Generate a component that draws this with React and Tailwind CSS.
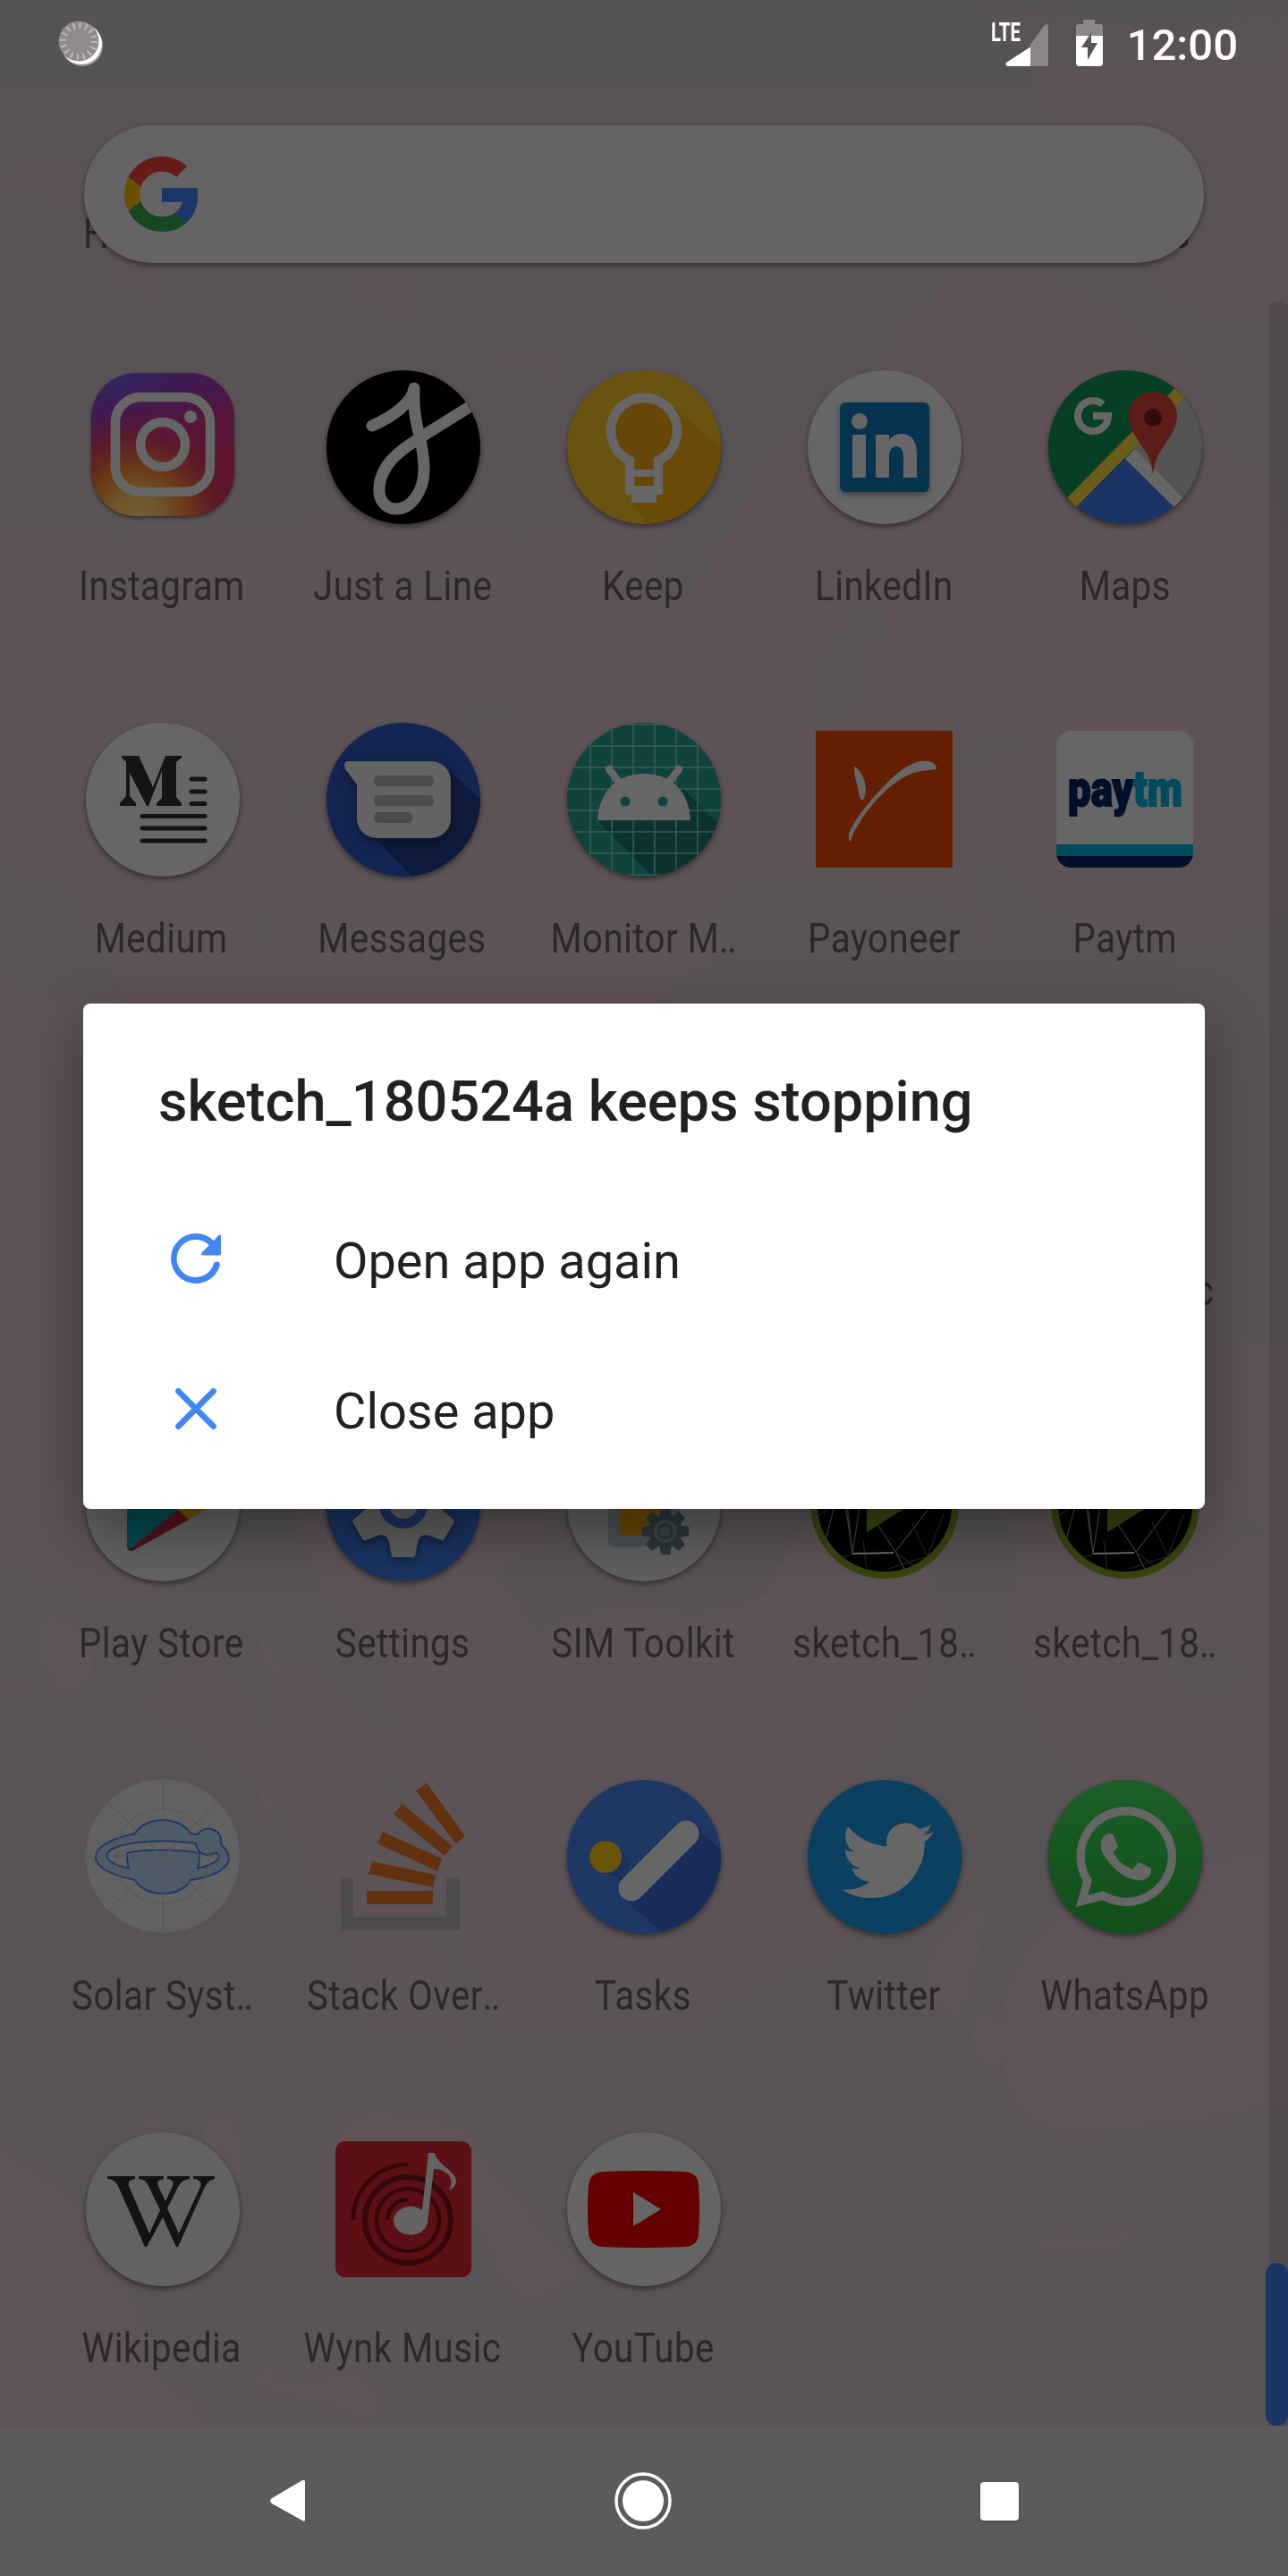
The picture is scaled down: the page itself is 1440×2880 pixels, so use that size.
import React from "react";
import { FaWhatsapp } from "react-icons/fa";

const CHALK = "#666666";

function Disc({ fill = CHALK, children, id }) {
  return (
    <g>
      <clipPath id={"clip-" + id}>
        <circle r="86" />
      </clipPath>
      <circle r="86" fill={fill} className="drop-shadow-[0_3px_3px_rgba(0,0,0,0.45)]" />
      <g clipPath={"url(#clip-" + id + ")"}>{children}</g>
    </g>
  );
}

function Instagram() {
  return (
    <g>
      <defs>
        <linearGradient id="igBase" x1="0" y1="0" x2="0.35" y2="1">
          <stop offset="0" stopColor="#2a2d63" />
          <stop offset="0.25" stopColor="#3f1a52" />
          <stop offset="0.6" stopColor="#591639" />
          <stop offset="1" stopColor="#5d1527" />
        </linearGradient>
        <radialGradient id="igGlow" cx="0.32" cy="1" r="0.75">
          <stop offset="0" stopColor="#73602f" />
          <stop offset="0.22" stopColor="#6e5629" />
          <stop offset="0.45" stopColor="#6b3a15" />
          <stop offset="0.75" stopColor="#5c1a27" stopOpacity="0.8" />
          <stop offset="1" stopColor="#591639" stopOpacity="0" />
        </radialGradient>
      </defs>
      <rect x="-80" y="-83" width="160" height="160" rx="50" fill="url(#igBase)" className="drop-shadow-[0_2px_2px_rgba(0,0,0,0.45)]" />
      <rect x="-80" y="-83" width="160" height="160" rx="50" fill="url(#igGlow)" />
      <g fill="none" stroke={CHALK} strokeWidth="10.5">
        <rect x="-53" y="-56" width="106" height="106" rx="28" />
        <circle cy="-3" r="25" />
      </g>
      <circle cx="31" cy="-34" r="7" fill={CHALK} />
    </g>
  );
}

function JustALine() {
  return (
    <Disc id="jal" fill="#000">
      <path d="M-35 -24C-12 -34 10 -50 12 -66C10 -22 23 -12 23 25C23 50 8 69 -8 69C-21 69 -28 58 -27 45C-25 14 6 -2 24 -14L80 -49" fill="none" stroke={CHALK} strokeWidth="13" strokeLinecap="round" strokeLinejoin="round" />
    </Disc>
  );
}

function Keep() {
  return (
    <Disc id="keep" fill="#6a520f">
      <path d="M34 -44L130 40V110H20L-14 60Z" fill="#684b06" />
      <path d="M-16 53V16A37 37 0 1 1 16 16V53Z" fill="#67460a" />
      <path d="M-16 48V15A37 37 0 1 1 16 15V48" fill="none" stroke={CHALK} strokeWidth="10.5" />
      <path d="M-21 25H21V33H-21ZM-21 43H21V53H14V62H-14V53H-21Z" fill={CHALK} />
    </Disc>
  );
}

function LinkedIn() {
  return (
    <Disc id="li">
      <rect x="-50" y="-50" width="100" height="100" rx="6" fill="#063450" className="drop-shadow-[0_3px_3px_rgba(0,0,0,0.35)]" />
      <g fill={CHALK}>
        <circle cx="-28" cy="-29" r="9" />
        <rect x="-36" y="-14" width="15" height="48" />
        <path d="M-10 -14H5V-8C11 -18 36 -21 36 7V34H21V10C21 -5 5 -4 5 10V34H-10Z" />
      </g>
    </Disc>
  );
}

function Maps() {
  return (
    <Disc id="maps" fill="#073f24">
      <path d="M90 -90L0 13L90 110Z" fill="#535353" />
      <path d="M11 2L90 83L66 100L0 13Z" fill="#666" />
      <path d="M-90 102L0 13L90 102Z" fill="#1b3564" />
      <path d="M-85 77L76 -87L88 -77L-70 82Z" fill="#6b5c1a" />
      <path d="M31 31C29 8 20 3 9 -17C-4 -40 10 -62 31 -62S66 -40 53 -17C42 3 33 8 31 31Z" fill="#5c1c18" />
      <circle cx="31" cy="-33" r="10" fill="#340d0b" />
      <path d="M-25 -48A17 17 0 1 0 -19 -35H-36" fill="none" stroke={CHALK} strokeWidth="8" />
    </Disc>
  );
}

function Medium() {
  return (
    <Disc id="med">
      <path d="M-46 -49H-27L-11 -14L3 -49H21V-47L15 -42V-3L21 4V7H-7V4L-1 -2V-32L-16 7H-18L-37 -30V-4L-30 4V7H-48V4L-41 -4V-42L-46 -47Z" fill="#141414" />
      <path d="M32 -23H47M32 -9H47M32 4.500H47M-23 18.500H47M-23 32H47M-23 46H47" stroke="#141414" strokeWidth="5" strokeLinecap="round" />
    </Disc>
  );
}

function Messages() {
  return (
    <Disc id="msg" fill="#142552">
      <path d="M49 -34L130 40V120H44L-38 38Z" fill="#0f1b3c" />
      <path d="M-61 -43H31A22 22 0 0 1 53 -21V21A22 22 0 0 1 31 43H-30A22 22 0 0 1 -52 21V-17L-65 -34Q-68 -43 -61 -43Z" fill="#636363" className="drop-shadow-[0_4px_6px_rgba(0,0,0,0.4)]" />
      <g fill="#4b4b4b">
        <rect x="-33" y="-27" width="67" height="12" rx="5" />
        <rect x="-33" y="-5" width="67" height="12" rx="5" />
        <rect x="-33" y="14" width="43" height="12" rx="5" />
      </g>
    </Disc>
  );
}

function MonitorM() {
  return (
    <Disc id="mon" fill="#11433e">
      <path d="M44 -12L130 74V140H62L-52 23Z" fill="#0d332e" />
      <path d="M-60 -90V90M-36 -90V90M-12 -90V90M12 -90V90M36 -90V90M60 -90V90M-90 -84H90M-90 -60H90M-90 -36H90M-90 -12H90M-90 12H90M-90 36H90M-90 60H90M-90 84H90" stroke="#345f58" strokeWidth="1.500" />
      <path d="M-52 23C-50 -12 -28 -29 0 -29S50 -12 52 23Z" fill={CHALK} />
      <path d="M-39 -34L-26 -17M39 -34L26 -17" stroke={CHALK} strokeWidth="8.500" strokeLinecap="round" />
      <circle cx="-21" cy="2" r="5.500" fill="#11433e" />
      <circle cx="21" cy="2" r="5.500" fill="#11433e" />
    </Disc>
  );
}

function Payoneer() {
  return (
    <g>
      <rect x="-77" y="-77" width="153" height="153" fill="#641f00" />
      <path d="M-38 47C-34 30 -8 -8 20 -24C34 -33 47 -32 57 -34Q60 -36 54 -41C42 -47 25 -40 8 -24C-12 -5 -34 22 -40 38Q-41 45 -38 47ZM-33 -37Q-22 -28 -21 -12Q-22 -1 -25 1Q-28 1 -30 -14Q-35 -30 -34 -37Z" fill="#666" />
    </g>
  );
}

function Paytm() {
  return (
    <g>
      <clipPath id="clip-paytm">
        <rect x="-77" y="-77" width="153" height="153" rx="16" />
      </clipPath>
      <g clipPath="url(#clip-paytm)">
        <rect x="-77" y="-77" width="153" height="128" fill="#666" />
        <rect x="-77" y="50" width="153" height="13" fill="#004a60" />
        <rect x="-77" y="63" width="153" height="14" fill="#00102b" />
      </g>
      <text x="-64" y="7" textLength="128" lengthAdjust="spacingAndGlyphs" fontSize="56" fill="#00102b" strokeWidth="2" className="font-['Roboto'] font-black">
        <tspan stroke="#00102b">pay</tspan>
        <tspan fill="#004a60" stroke="#004a60">tm</tspan>
      </text>
    </g>
  );
}

function PlayStore() {
  return (
    <Disc id="play" fill="#626262">
      <path d="M-40 -50V48Q-39 54 -34 51L17 6L-12 -26Z" fill="#00494f" />
      <path d="M-38 51Q-36 53 -32 51L29 17L17 6Z" fill="#54121d" />
      <path d="M17 6L29 17L54 2Q56 -1 52 -4L30 -14Z" fill="#635200" />
    </Disc>
  );
}

const SIX = [0, 60, 120, 180, 240, 300];
const EIGHT = [0, 45, 90, 135, 180, 225, 270, 315];

function Settings() {
  return (
    <Disc id="set" fill="#1a3361">
      <g fill="#5e5e5e" className="drop-shadow-[0_3px_4px_rgba(0,0,0,0.4)]">
        <circle r="41" />
        {SIX.map((a) => (
          <path key={a} transform={"rotate(" + a + ")"} d="M-24 32Q-17 36 -15.500 44L-13.500 56Q-13 59 -10 59H10Q13 59 13.500 56L15.500 44Q17 36 24 32Z" />
        ))}
      </g>
      <circle r="27" fill="#1a3361" />
      <circle r="16" fill="#5e5e5e" />
    </Disc>
  );
}

function SimToolkit() {
  return (
    <Disc id="sim" fill="#606060">
      <rect x="-40" y="-50" width="80" height="97" rx="6" fill="#4a5052" />
      <rect x="-28" y="-20" width="46" height="55" rx="5" fill="#664803" />
      <g transform="translate(24 30)" fill="#2c363a">
        <circle r="18" />
        {EIGHT.map((a) => (
          <path key={a} transform={"rotate(" + a + ")"} d="M-7 14L-5 26H5L7 14Z" />
        ))}
        <circle r="11" fill="none" stroke="#3b464b" strokeWidth="4" />
        <circle r="6" fill="#3b464b" />
      </g>
    </Disc>
  );
}

function Sketch() {
  return (
    <g>
      <circle r="79" fill="#020202" stroke="#384511" strokeWidth="8" />
      <g fill="none" stroke="#444" strokeWidth="1.200">
        <path d="M-66 40L-48 -30L-36 55L-26 -10M-36 55L-44 -20M12 53L56 -4M12 53L-12 16M12 53L22 72" />
        <path d="M-48 60L-36 55M12 53L32 68M30 20L48 58L66 10M-24 40L-20 74M48 58L4 72M-74 12L-54 0" stroke="#262626" />
        <path d="M-36 55L10 54" stroke="#6b6b6b" strokeWidth="2" />
      </g>
      <path d="M-20 -52V31L47 -11Z" fill="#384511" />
    </g>
  );
}

function SolarSystem() {
  return (
    <g>
      <circle cy="-1" r="86" fill="#616161" />
      <path d="M-31 -26C-20 -46 20 -46 31 -26L39 -25C46 -37 68 -32 65 -14C86 5 68 20 31 26C20 46 -20 46 -31 26C-90 14 -90 -14 -31 -26ZM-63 -1C-60 7 -50 10 -38 13C-40 6 -40 2 -40 -4C-25 -9 20 -9 41 -4C41 2 41 6 39 13C55 9 70 2 59 -5C50 2 38 -4 37 -15C0 -21 -62 -17 -63 -1Z" fill="#4f5a67" fillRule="evenodd" stroke="#1d3868" strokeWidth="2" strokeLinejoin="round" />
      <g fill="none" stroke="#555" strokeOpacity="0.7" strokeWidth="1.500">
        <path d="M-86 -1H86M0 -86V85M-61 -61L61 60M61 -61L-61 60" />
        <circle r="53" cy="-1" />
      </g>
    </g>
  );
}

function StackOverflow() {
  return (
    <g>
      <path d="M-70 23H-56V67H48V23H63V82H-70Z" fill="#4b4b4b" />
      <path d="M-41 38H33V53H-41ZM-35 5L36 20L33 34L-39 19ZM-23 -28L43 2L38 16L-29 -15ZM-1 -59L55 -12L46 -1L-11 -48ZM26 -83L69 -23L58 -15L14 -74Z" fill="#62310f" />
    </g>
  );
}

function Tasks() {
  return (
    <Disc id="tasks" fill="#1e3865">
      <path d="M57 -36L110 17V140H80L-23 46Z" fill="#192c59" />
      <path d="M-31 -13L-14 4L-24 26L-56 13Z" fill="#1b325f" />
      <circle cx="-43" r="18" fill="#6a5408" />
      <path d="M-14 35L47 -26" stroke={CHALK} strokeWidth="29" strokeLinecap="round" />
    </Disc>
  );
}

function Twitter() {
  return (
    <Disc id="tw" fill="#0c4060">
      <path transform="translate(-48 -47.500) scale(4.300)" fill={CHALK} d="M23.953 4.570a10 10 0 01-2.825.775 4.958 4.958 0 002.163-2.723c-.951.555-2.005.959-3.127 1.184a4.920 4.920 0 00-8.384 4.482C7.690 8.095 4.067 6.130 1.640 3.162a4.822 4.822 0 00-.666 2.475c0 1.710.870 3.213 2.188 4.096a4.904 4.904 0 01-2.228-.616v.060a4.923 4.923 0 003.946 4.827 4.996 4.996 0 01-2.212.085 4.936 4.936 0 004.604 3.417 9.867 9.867 0 01-6.102 2.105c-.390 0-.779-.023-1.170-.067a13.995 13.995 0 007.557 2.209c9.053 0 13.998-7.496 13.998-13.985 0-.210 0-.420-.015-.630A9.935 9.935 0 0024 4.590z" />
    </Disc>
  );
}

function WhatsApp() {
  return (
    <g>
      <linearGradient id="waFill" x1="0" y1="0" x2="0" y2="1">
        <stop offset="0.1" stopColor="#1b5d26" />
        <stop offset="0.9" stopColor="#12501b" />
      </linearGradient>
      <Disc id="wa" fill="url(#waFill)">
        <FaWhatsapp x="-63" y="-64" size={128} color={CHALK} />
      </Disc>
    </g>
  );
}

function Wikipedia() {
  return (
    <Disc id="wiki" fill="#626262">
      <path fill="#131313" d="M-62 -37H-31V-34Q-40 -33 -38 -26L-15 27L-3 1L-17 -28Q-20 -34 -27 -34V-37H1V-34Q-8 -33 -5 -26L3 -9L11 -26Q14 -33 5 -34V-37H30V-34Q21 -33 17 -25L5 -1L18 27L42 -25Q45 -33 34 -34V-37H58V-34Q51 -33 47 -25L17 42H15L0 9L-18 42H-20L-50 -26Q-54 -34 -62 -34Z" />
    </Disc>
  );
}

function WynkMusic() {
  return (
    <g>
      <rect x="-76" y="-76" width="152" height="152" rx="11" fill="#5c1013" />
      <g fill="none" stroke="#33070a">
        <path d="M5 -50A61 61 0 0 0 -56 12" strokeWidth="4.500" />
        <circle cx="5" cy="12" r="48" strokeWidth="6" />
        <circle cx="5" cy="12" r="35" strokeWidth="4.500" />
        <path d="M5 -11A23 23 0 0 0 -18 12" strokeWidth="4.500" />
      </g>
      <path d="M28 -63H35C37 -50 58 -44 59 -32Q59 -25 51 -21C58 -34 50 -45 34 -45L27 14A19 16 0 1 1 21 1Z" fill="#636363" />
    </g>
  );
}

function YouTube() {
  return (
    <Disc id="yt" fill="#646464">
      <path d="M-46 -42Q0 -44 46 -42Q61 -41 61 -26Q63 0 61 26Q61 41 46 42Q0 44 -46 42Q-61 41 -62 26Q-64 0 -62 -26Q-61 -41 -46 -42Z" fill="#650000" />
      <path d="M-12 -19L19 0L-12 19Z" fill="#666" />
    </Disc>
  );
}

const rows = [
  [
    { label: "Instagram", Icon: Instagram },
    { label: "Just a Line", Icon: JustALine },
    { label: "Keep", Icon: Keep },
    { label: "LinkedIn", Icon: LinkedIn },
    { label: "Maps", Icon: Maps },
  ],
  [
    { label: "Medium", Icon: Medium },
    { label: "Messages", Icon: Messages },
    { label: "Monitor M‥", Icon: MonitorM },
    { label: "Payoneer", Icon: Payoneer },
    { label: "Paytm", Icon: Paytm },
  ],
  [{}, {}, {}, {}, { label: "Play Music" }],
  [
    { label: "Play Store", Icon: PlayStore },
    { label: "Settings", Icon: Settings },
    { label: "SIM Toolkit", Icon: SimToolkit },
    { label: "sketch_18‥", Icon: Sketch },
    { label: "sketch_18‥", Icon: Sketch },
  ],
  [
    { label: "Solar Syst‥", Icon: SolarSystem },
    { label: "Stack Over‥", Icon: StackOverflow },
    { label: "Tasks", Icon: Tasks },
    { label: "Twitter", Icon: Twitter },
    { label: "WhatsApp", Icon: WhatsApp },
  ],
  [
    { label: "Wikipedia", Icon: Wikipedia },
    { label: "Wynk Music", Icon: WynkMusic },
    { label: "YouTube", Icon: YouTube },
  ],
];

function Label({ text }) {
  const dotted = text.endsWith("‥");
  const base = dotted ? text.slice(0, -1) : text;
  return (
    <span className="block origin-center scale-x-[0.885] whitespace-nowrap text-[45.5px] leading-[54px] tracking-[0.5px] text-[#2b272a]">
      {base}
      {dotted && <span className="tracking-[-2px]">..</span>}
    </span>
  );
}

function AppCell({ label, Icon }) {
  return (
    <div className="flex h-[394px] flex-col items-center">
      <svg width="172" height="172" viewBox="-86 -86 172 172" className="shrink-0 overflow-visible">
        {Icon && <Icon />}
      </svg>
      <div className="mr-[2px] mt-[43px] flex justify-center">{label && <Label text={label} />}</div>
    </div>
  );
}

function Wallpaper() {
  return (
    <svg className="absolute inset-0" width="1440" height="2880" viewBox="0 0 1440 2880">
      <defs>
        <linearGradient id="wallBase" x1="0" y1="0" x2="0" y2="1">
          <stop offset="0" stopColor="#555355" />
          <stop offset="0.08" stopColor="#585356" />
          <stop offset="0.3" stopColor="#5d5356" />
          <stop offset="0.65" stopColor="#5d5357" />
          <stop offset="0.85" stopColor="#5a5358" />
          <stop offset="1" stopColor="#5a5357" />
        </linearGradient>
      </defs>
      <rect width="1440" height="2880" fill="url(#wallBase)" />
      <g fill="#5e5256">
        <path d="M1100 0C1180 80 1160 200 1260 300C1300 340 1380 380 1440 360V0H1400C1340 60 1240 20 1100 0Z" opacity="0.5" />
        <path d="M0 210Q60 190 90 260Q130 340 180 330Q190 250 130 190Q60 170 0 190Z" opacity="0.5" />
        <path d="M385 320Q440 260 480 320Q470 350 450 355Q410 350 385 320Z" opacity="0.6" />
        <path d="M130 710Q200 640 290 620Q340 600 390 570Q420 590 470 630Q440 680 330 710L300 780H120Z" />
        <path d="M550 400Q600 380 640 430Q600 410 550 400ZM680 585H750Q720 640 640 690Q600 740 560 700Q620 670 680 585Z" />
        <path d="M850 530Q870 480 960 470Q1000 380 1060 310Q1180 280 1280 390Q1350 400 1350 500Q1440 540 1440 600V760H760Q740 660 850 530Z" />
      </g>
      <g fill="#575356">
        <path d="M870 390H810Q800 470 760 540Q740 600 740 700Q800 640 840 540Q860 470 870 390Z" />
        <path d="M945 690Q950 670 990 680Q1000 700 960 740Q970 800 930 805Q895 790 910 740Q930 720 945 690Z" />
        <path d="M290 780L240 850Q270 840 280 780ZM400 850Q370 850 330 880Q310 920 270 950Q250 1000 250 990Q280 1000 268 940Q330 910 360 890ZM500 780Q540 820 500 830Q560 810 600 780Z" />
        <path d="M0 970Q90 970 110 1060L140 1110Q80 1130 0 1100Z" />
        <path d="M280 1005Q300 1010 318 1030Q305 1060 295 1075ZM1060 840Q1120 820 1165 825Q1130 860 1070 852Z" />
        <path d="M810 1000Q850 960 910 985Q960 970 985 1000Q1060 980 1080 1020Q1090 1060 1110 1050Q1080 980 1085 955Q1160 970 1200 1040Q1320 1080 1440 1020V1500H1360V1130H740Q740 1100 820 1060Q780 1030 810 1000Z" />
        <path d="M200 1680H330Q340 1760 380 1800Q430 1850 450 1960Q380 1870 310 1860Q300 1960 310 1960Q260 1870 240 1840Q160 1900 110 1960Q80 1900 0 1880V1740Q60 1780 180 1790Z" />
        <path d="M610 1680H920Q880 1720 860 1780Q800 1820 730 1800Q640 1800 600 1830Q580 1800 560 1770Q560 1740 610 1735Z" opacity="0.8" />
        <path d="M1060 1690H1120Q1150 1760 1120 1820Q1160 1900 1150 1960Q1180 2060 1150 2180Q1110 2130 1080 2190Q1080 2060 960 1990Q1050 1880 1060 1820Q1030 1780 1060 1690ZM1380 1700Q1430 1700 1420 1720Q1395 1730 1380 1700ZM1310 1850Q1350 1820 1400 1860Q1400 1890 1350 1900Q1290 1880 1310 1850Z" />
        <path d="M980 1960Q1080 1900 1180 1960Q1260 2000 1230 2110Q1120 2180 1120 2340Q1040 2420 920 2380Q800 2380 760 2310Q780 2240 880 2210Q990 2180 970 2110Q940 2010 980 1960Z" opacity="0.85" />
        <path d="M0 1900Q180 1890 250 1960Q330 2000 330 2090Q390 2130 390 2180L400 2300Q360 2460 300 2520Q180 2540 0 2400Z" opacity="0.6" />
        <path d="M430 1960Q490 2080 520 2200Q580 2300 560 2340Q500 2220 430 1960Z" opacity="0.9" />
      </g>
      <g fill="#61545a" opacity="0.8">
        <path d="M1100 2100Q1112 2060 1110 2080Q1110 2100 1095 2110ZM1085 2130Q1100 2110 1100 2150Q1080 2280 1060 2250Q1000 2220 1060 2160Z" />
        <path d="M1130 2340Q1100 2240 1150 2180Q1200 2100 1300 2100Q1400 2060 1440 2080V2350Q1320 2380 1180 2384Q1150 2370 1130 2340ZM1085 2260Q1110 2230 1120 2270Q1130 2310 1108 2312Q1085 2300 1085 2260Z" />
        <path d="M160 2370Q175 2360 182 2380Q180 2400 168 2400Q155 2390 160 2370ZM230 2370Q270 2350 270 2420Q280 2450 255 2430Q220 2400 230 2370Z" />
        <path d="M360 2410Q400 2340 460 2370Q520 2360 545 2420Q600 2480 620 2510L660 2540Q620 2560 590 2576Q560 2560 540 2500Q480 2440 360 2510Z" opacity="0.7" />
        <path d="M0 2400Q60 2420 100 2480Q150 2560 180 2660Q250 2700 265 2800Q240 2880 230 2880H0Z" opacity="0.7" />
        <path d="M285 2660Q300 2630 310 2660Q340 2670 390 2650Q440 2680 420 2700Q400 2715 380 2690Q300 2680 285 2660ZM1060 2510Q1080 2500 1080 2515H1150Q1180 2490 1210 2505Q1250 2510 1260 2490Q1290 2490 1280 2480Q1250 2520 1240 2516H1160Z" />
        <path d="M50 1800Q120 1830 100 1880Q80 1910 60 1880Q30 1850 50 1800ZM290 1830Q320 1850 310 1880Q290 1860 290 1830ZM290 2000Q310 2010 305 2030Q290 2030 290 2000Z" />
      </g>
    </svg>
  );
}

function GoogleG() {
  return (
    <svg width="84" height="84" viewBox="0 0 48 48">
      <path fill="#651c17" d="M24 9.500c3.540 0 6.710 1.220 9.210 3.600l6.850-6.850C35.900 2.380 30.470 0 24 0 14.620 0 6.510 5.380 2.560 13.220l7.980 6.190C12.430 13.720 17.740 9.500 24 9.500z" />
      <path fill="#1b3767" d="M46.980 24.550c0-1.570-.150-3.090-.380-4.550H24v9.020h12.940c-.580 2.960-2.260 5.480-4.780 7.180l7.730 6c4.510-4.180 7.090-10.360 7.090-17.650z" />
      <path fill="#6a5100" d="M10.530 28.590c-.480-1.450-.760-2.990-.760-4.590s.270-3.140.760-4.590l-7.980-6.190C.920 16.460 0 20.120 0 24c0 3.880.920 7.540 2.560 10.780l7.970-6.190z" />
      <path fill="#164722" d="M24 48c6.480 0 11.930-2.130 15.890-5.810l-7.730-6c-2.150 1.450-4.920 2.300-8.160 2.300-6.260 0-11.570-4.220-13.470-9.910l-7.980 6.190C6.510 42.620 14.620 48 24 48z" />
    </svg>
  );
}

function StatusBar() {
  return (
    <header className="flex h-[98px] items-start justify-between pl-[65px] pr-[56px] pt-[22px]">
      <svg width="52" height="54" viewBox="0 0 52 54">
        <circle cx="27" cy="29" r="23" fill="#9b999a" />
        <circle cx="26" cy="27" r="23" fill="#fff" />
        <circle cx="23" cy="24" r="22.500" fill="#8f8b8d" />
        <circle cx="23" cy="24" r="17.500" fill="none" stroke="#bcb9bb" strokeWidth="7" strokeDasharray="2 4.870" />
      </svg>
      <div className="flex items-start">
        <svg width="70" height="56" viewBox="-4 0 70 56">
          <text x="0" y="23.500" fontSize="29" textLength="33" lengthAdjust="spacingAndGlyphs" fill="#fff" className="font-['Roboto'] font-bold">LTE</text>
          <path d="M44 30.500V52H19Q15 51 17 48Z" fill="#fff" />
          <path d="M44 28L59 7Q62 3 64 7V50Q64 52 62 52H44Z" fill="#8b8789" />
        </svg>
        <svg width="30" height="52" viewBox="0 0 30 52" className="ml-[29px]">
          <path d="M8 0H21V5H27Q30 5 30 9V18H0V9Q0 5 3 5H8Z" fill="#8b8789" />
          <path d="M0 18H30V48Q30 52 27 52H3Q0 52 0 48Z" fill="#fff" />
          <path d="M18 13L6 31H13V45L24 26H17V13Z" fill="#5a5457" />
        </svg>
        <span className="ml-[27px] text-[49px] font-medium leading-[58px] text-white">12:00</span>
      </div>
    </header>
  );
}

function CrashDialog() {
  return (
    <section className="absolute left-[93px] top-[1122px] flex h-[565px] w-[1254px] flex-col rounded-[8px] bg-white pl-[84px] pt-[72px] text-[#212121] shadow-[0_24px_64px_0_rgba(0,0,0,0.38)]">
      <h1 className="whitespace-nowrap text-[63.1px] font-medium leading-[74px]">sketch_180524a keeps stopping</h1>
      <button className="mt-[55px] flex h-[168px] items-center text-left">
        <svg width="84" height="84" viewBox="0 0 24 24" fill="#4285f4">
          <path d="M17.650 6.350A7.960 7.960 0 0 0 12 4a8 8 0 1 0 7.600 10.500Q19.900 13 18.600 13Q17.900 13 17.650 13.700A6 6 0 1 1 12 6c1.660 0 3.140.690 4.220 1.780L14 10Q13.300 11 14.300 11H19.500Q20 11 20 10.500V4.800Q19.900 4 19.300 4.600Z" />
        </svg>
        <span className="ml-[112px] pt-[5px] text-[55.9px] leading-[66px]">Open app again</span>
      </button>
      <button className="flex h-[168px] items-center text-left">
        <svg width="84" height="84" viewBox="0 0 24 24" fill="none" stroke="#4285f4" strokeWidth="1.900" strokeLinecap="round">
          <path d="M6.400 6.400L17.600 17.600M17.600 6.400L6.400 17.600" />
        </svg>
        <span className="ml-[112px] pt-[5px] text-[55.9px] leading-[66px]">Close app</span>
      </button>
    </section>
  );
}

function NavBar() {
  return (
    <nav className="absolute inset-x-0 bottom-0 flex h-[168px] items-center justify-between bg-[#5e5c5e]/75 px-[301px]">
      <svg width="40" height="48" viewBox="0 0 40 48">
        <path d="M37 1Q40 0 40 3V45Q40 48 37 46L3 27Q-1 24 3 21Z" fill="#fff" />
      </svg>
      <svg width="64" height="64" viewBox="0 0 64 64">
        <circle cx="32" cy="32" r="30" fill="none" stroke="#fff" strokeWidth="3.500" />
        <circle cx="32" cy="32" r="23" fill="#fff" />
      </svg>
      <div className="h-[43px] w-[43px] rounded-[4px] bg-white shadow-[0_1px_2px_rgba(0,0,0,0.3)]" />
    </nav>
  );
}

export default function App() {
  return (
    <div className="relative h-[2880px] w-[1440px] overflow-hidden bg-[#5b5357] font-['Roboto',sans-serif]">
      <Wallpaper />
      <div className="relative">
        <StatusBar />
        <div className="flex h-[316px] justify-between pl-[91px] pr-[108px] pt-[137px]">
          <Label text="H" />
          <Label text="s" />
        </div>
        <main className="ml-[47px] grid w-[1346px] grid-cols-5">
          {rows.flat().map((app, i) => (
            <AppCell key={i} {...app} />
          ))}
        </main>
      </div>
      <div className="absolute left-[94px] top-[140px] flex h-[154px] w-[1252px] items-center rounded-full bg-[#656366] pl-[45px] shadow-[0_3px_6px_rgba(0,0,0,0.4)]">
        <GoogleG />
      </div>
      <div className="absolute bottom-[168px] right-0 top-[336px] w-[21px] rounded-t-[10px] bg-black/10" />
      <div className="absolute right-0 top-[2530px] h-[182px] w-[25px] rounded-[12px] bg-[#1b3564]" />
      <NavBar />
      <CrashDialog />
    </div>
  );
}
